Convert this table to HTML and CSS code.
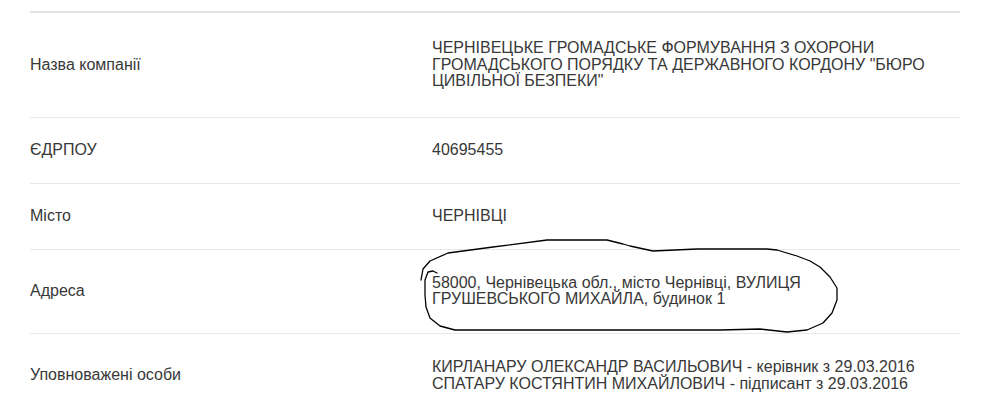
FILE: index.html
```html
<!DOCTYPE html>
<html lang="uk">
<head>
<meta charset="utf-8">
<title>Компанія</title>
<link rel="stylesheet" href="styles.css">
</head>
<body>
<div class="info">
  <div class="row row--three">
    <div class="label">Назва компанії</div>
    <div class="value">ЧЕРНІВЕЦЬКЕ ГРОМАДСЬКЕ ФОРМУВАННЯ З ОХОРОНИ ГРОМАДСЬКОГО ПОРЯДКУ ТА ДЕРЖАВНОГО КОРДОНУ "БЮРО ЦИВІЛЬНОЇ БЕЗПЕКИ"</div>
  </div>
  <div class="row">
    <div class="label">ЄДРПОУ</div>
    <div class="value">40695455</div>
  </div>
  <div class="row">
    <div class="label">Місто</div>
    <div class="value">ЧЕРНІВЦІ</div>
  </div>
  <div class="row row--two">
    <div class="label">Адреса</div>
    <div class="value">58000, Чернівецька обл., місто Чернівці, ВУЛИЦЯ ГРУШЕВСЬКОГО МИХАЙЛА, будинок 1</div>
  </div>
  <div class="row row--two">
    <div class="label">Уповноважені особи</div>
    <div class="value">КИРЛАНАРУ ОЛЕКСАНДР ВАСИЛЬОВИЧ - керівник з 29.03.2016<br>СПАТАРУ КОСТЯНТИН МИХАЙЛОВИЧ - підписант з 29.03.2016</div>
  </div>
</div>
<svg class="scribble" viewBox="0 0 985 417" width="985" height="417" aria-hidden="true">
  <path d="M437 273 L433 271 L428 272 L425 280 L425 295 L426 307 L430 318 L440 326 L455 330 L520 330 L620 330 L720 330 L760 329 L787 332 L807 330 L823 323 L832 313 L837 300 L837 288 L830 277 L820 267 L810 261 L797 256 L777 250 L767 249 L697 249 L653 251 L630 246 L623 244 L607 240 L547 240 L493 247 L448 253 L430 261 L423 269 L421 280"/>
</svg>
</body>
</html>
```
FILE: styles.css
```css
html, body {
  margin: 0;
  padding: 0;
  background: #ffffff;
}

body {
  font-family: "Liberation Sans", Arial, sans-serif;
  font-size: 16px;
  color: #383838;
  position: relative;
  width: 985px;
  height: 417px;
  overflow: hidden;
}

.info {
  margin: 11px 25px 0 30px;
  border-top: 2px solid #e3e3e3;
}

.row {
  display: grid;
  grid-template-columns: 402px 1fr;
  align-items: center;
  padding: 24px 0 24.5px;
  border-bottom: 1px solid #e8e8e8;
}

.row--three {
  padding: 27px 0 27px;
}

.row--two {
  padding: 25px 0 25.5px;
}

.label,
.value {
  line-height: 16.5px;
}

.value {
  padding-right: 30px;
}

.scribble {
  position: absolute;
  left: 0;
  top: 0;
  pointer-events: none;
}

.scribble path {
  fill: none;
  stroke: #000000;
  stroke-width: 1.3;
  stroke-linejoin: round;
  stroke-linecap: round;
}
```
